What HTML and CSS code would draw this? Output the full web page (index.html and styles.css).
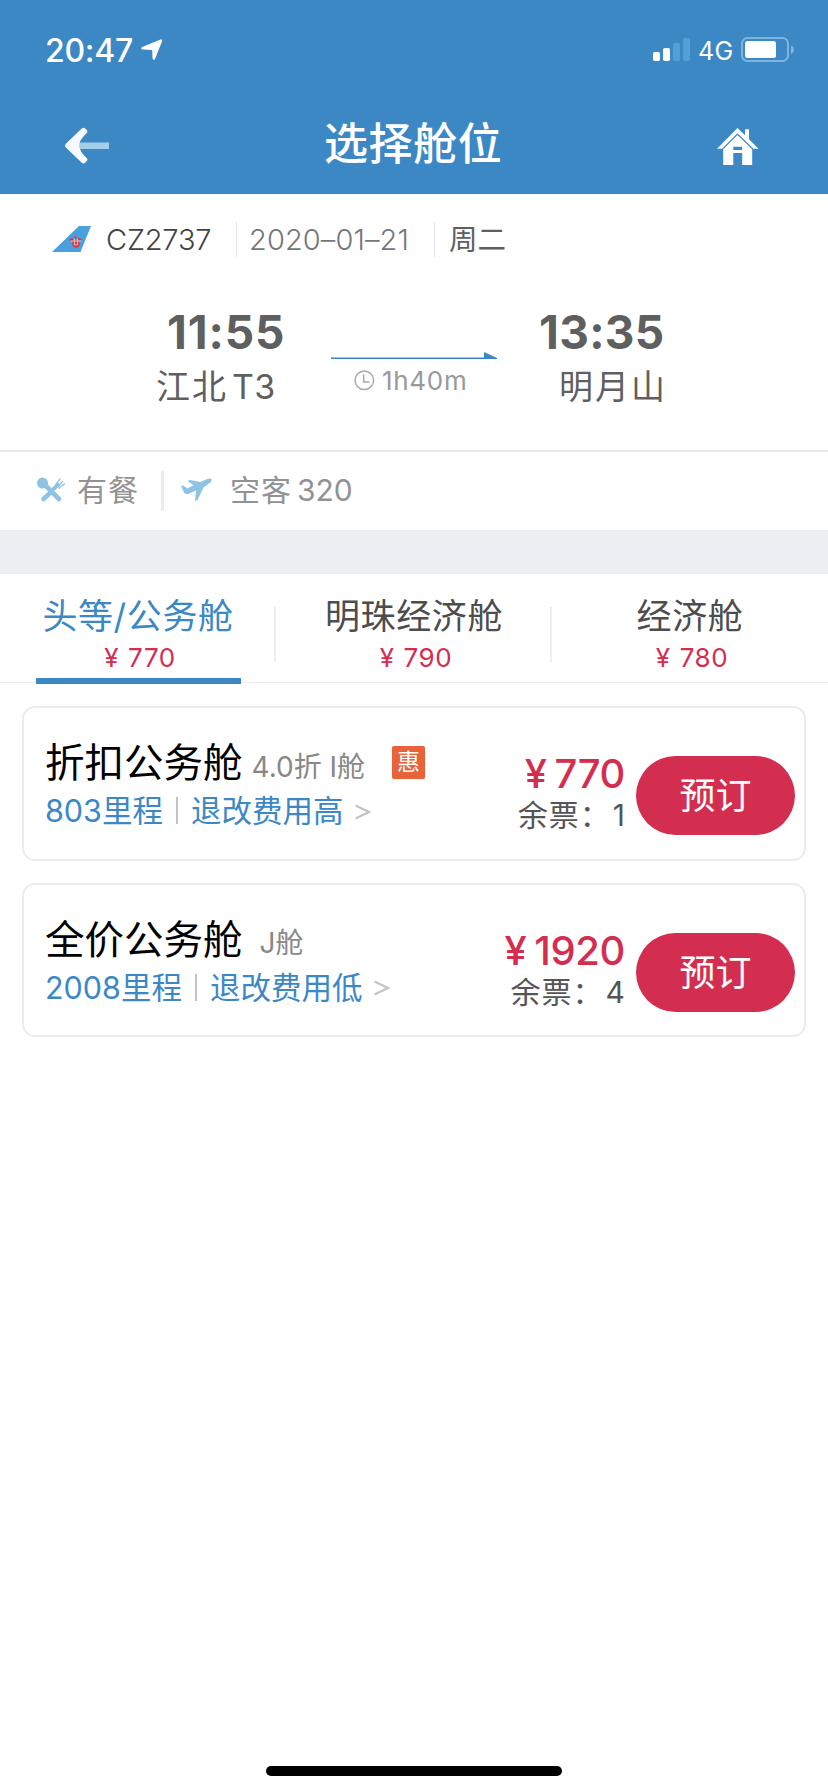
FILE: index.html
```html
<!DOCTYPE html>
<html lang="zh-CN">
<head>
<meta charset="utf-8">
<title>选择舱位</title>
<link rel="stylesheet" href="styles.css">
</head>
<body>
<div class="screen">
  <header class="header">
    <div class="status">
      <span class="status-time">20:47</span>
      <svg class="status-loc" width="22" height="22" viewBox="0 0 22 22"><path d="M19.500 .6 Q21.800 -.2 21.100 2.200 L14 20 Q12.600 21.800 11.600 19.800 L11.200 11 L1.600 10.600 Q-.8 9.600 1.200 8Z" fill="#fff"/></svg>
      <svg class="status-signal" width="38" height="24" viewBox="0 0 38 24"><g fill="#fff"><rect y="14" width="7" height="9" rx="1.8"/><rect x="10" y="10" width="7" height="13" rx="1.8"/></g><g fill="#549fd3"><rect x="20" y="5" width="7" height="18" rx="1.8"/><rect x="30" width="7" height="23" rx="1.8"/></g></svg>
      <span class="status-net">4G</span>
      <svg class="status-battery" width="54" height="26" viewBox="0 0 54 26"><rect x="1" y="1" width="46" height="23" rx="5.5" fill="none" stroke="#7db5de" stroke-width="2"/><rect x="4" y="4" width="31" height="17" rx="2.5" fill="#fff"/><path d="M50 8.5 Q53 9.5 53 12.5 Q53 15.500 50 17Z" fill="#7db5de"/></svg>
    </div>
    <nav class="nav">
      <svg class="nav-back" width="46" height="38" viewBox="0 0 46 38"><path d="M13 15.500H44V22H13Z" fill="#a4cde7"/><path d="M16.800 1.400 Q18.500 0 20.200 1.600 L22 3.300 Q23 4.800 21.600 6.200 Q14.500 12.500 14 18.600 Q14.500 24.500 21.600 31 Q23 32.400 22 33.800 L20.200 35.800 Q18.500 37.200 16.800 35.800 L.8 20.400 Q-.6 18.600 .8 16.800Z" fill="#f7faff"/></svg>
      <h1 class="nav-title">选择舱位</h1>
      <svg class="nav-home" width="42" height="38" viewBox="0 0 42 38"><path d="M20.500 0 L28 7.200 V1.200 H32 V11.200 L41.500 20.800 H36.500 L20.500 5.200 L5 20.800 H0Z" fill="#fff"/><path fill-rule="evenodd" d="M20.500 7 L35.200 21.200 V37 H25.200 V25 H16.300 V37 H6.200 V21.200Z M16.300 18.800 V22 H25.200 V18.800Z" fill="#fff"/></svg>
    </nav>
  </header>

  <section class="flight">
    <div class="flight-info">
      <svg class="tail" width="40" height="27" viewBox="0 0 40 27"><path d="M27 0H39L28.500 26H0Z" fill="#4a9fdf"/><path d="M17 14.500q1-3 4.500-2l-.5 2.500zM30 14q-1.500-2.500-4-2l.5 3zM22 10.500l1.500 3 1.500-3zM20.500 14h7v6q-3.500 3.500-7 0z" fill="#d9363f"/><path d="M22.500 12.500v6.500h3v-6.500M18.500 15h11" fill="none" stroke="#f3c4cd" stroke-width=".9"/></svg>
      <span class="flight-no">CZ2737</span>
      <span class="flight-date">2020–01–21</span>
      <span class="flight-day">周二</span>
    </div>
    <div class="route">
      <div class="stop stop-from"><div class="stop-time">11:55</div><div class="stop-city">江北<span class="terminal">T3</span></div></div>
      <div class="leg">
        <svg class="leg-line" width="167" height="8" viewBox="0 0 167 8"><path d="M0 5.500H153V0L166 6V7H0Z" fill="#3c88c5"/></svg>
        <div class="leg-time"><svg width="21" height="21" viewBox="0 0 21 21" fill="none" stroke="#aaa" stroke-width="1.500"><circle cx="10.300" cy="10.300" r="9.300"/><path d="M9.700 4.500V12H15.500"/></svg><span>1h40m</span></div>
      </div>
      <div class="stop stop-to"><div class="stop-time">13:35</div><div class="stop-city">明月山</div></div>
    </div>
    <div class="extras">
      <svg class="meal" width="29" height="26" viewBox="0 0 29 26"><g fill="none" stroke="#8fc3e3" stroke-linecap="round"><path d="M8 8L22 22" stroke-width="4.600"/><path d="M6.500 22L13 16" stroke-width="4.600"/><path d="M17 11.500L21 8" stroke-width="4"/><path d="M18.500 8L23 1.800M21 9.500L25.500 4.500M22 11.200L27.500 6.800" stroke-width="1.300"/></g><circle cx="5.500" cy="6" r="5.500" fill="#8fc3e3"/></svg>
      <span class="meal-text">有餐</span>
      <svg class="plane" width="32" height="24" viewBox="0 0 32 24"><path d="M30.500 1 Q31.500 3 28 5.500 L22.500 9.500 L16.500 22 L14 23 L15 12.500 L7 16 Q4 16.500 3 14.500 L0 8 L2 7.500 L6.500 10.500 L12.500 7.200 L6.500 3 L9 2 L19.500 4 L26 1 Q29.500 0 30.500 1Z" fill="#8fc3e3"/></svg>
      <span class="plane-text">空客<span class="model">320</span></span>
    </div>
  </section>

  <div class="band"></div>

  <div class="tabs">
    <div class="tab tab-active"><div class="tab-name">头等/公务舱</div><div class="tab-price"><span class="yen">¥</span>770</div></div>
    <div class="tab"><div class="tab-name">明珠经济舱</div><div class="tab-price"><span class="yen">¥</span>790</div></div>
    <div class="tab"><div class="tab-name">经济舱</div><div class="tab-price"><span class="yen">¥</span>780</div></div>
  </div>

  <main class="fares">
    <article class="fare">
      <div class="fare-main">
        <div class="fare-head"><span class="fare-name">折扣公务舱</span><span class="fare-class">4.0折 I舱</span><span class="fare-tag">惠</span></div>
        <div class="fare-rules"><span>803里程</span><i class="bar"></i><span>退改费用高</span><svg class="more" width="16" height="16" viewBox="0 0 16 16"><path d="M.5 1.500L14 8L.5 14.500" fill="none" stroke="#c0c3ca" stroke-width="2"/></svg></div>
      </div>
      <div class="fare-cost"><div class="fare-price"><span class="yen">¥</span>770</div><div class="fare-left">余票：<span class="count">1</span></div></div>
      <button class="book">预订</button>
    </article>
    <article class="fare">
      <div class="fare-main">
        <div class="fare-head"><span class="fare-name">全价公务舱</span><span class="fare-class fare-class-far">J舱</span></div>
        <div class="fare-rules"><span>2008里程</span><i class="bar"></i><span>退改费用低</span><svg class="more" width="16" height="16" viewBox="0 0 16 16"><path d="M.5 1.500L14 8L.5 14.500" fill="none" stroke="#c0c3ca" stroke-width="2"/></svg></div>
      </div>
      <div class="fare-cost"><div class="fare-price"><span class="yen">¥</span>1920</div><div class="fare-left">余票：<span class="count">4</span></div></div>
      <button class="book">预订</button>
    </article>
  </main>
  <div class="home-bar"></div>
</div>
</body>
</html>
```
FILE: styles.css
```css
* { box-sizing: border-box; margin: 0; padding: 0; }
body { background: #fff; font-family: Inter, "Noto Sans CJK SC", sans-serif; font-weight: 400; white-space: nowrap; }
svg { display: block; flex: none; }
.screen { width: 828px; height: 1792px; display: flex; flex-direction: column; overflow: hidden; }

.header { height: 194px; background: #3c88c5; color: #fff; }
.status { height: 100px; display: flex; align-items: center; padding-left: 45px; }
.status-time { width: 96px; font-size: 32px; font-weight: 500; letter-spacing: -.3px; }
.status-signal { margin-left: 490px; }
.status-net { width: 43px; margin-left: 7px; font-size: 25px; padding-top: 1px; letter-spacing: .4px; }
.nav { height: 92px; display: flex; align-items: center; padding-left: 65px; }
.nav-title { margin-left: 213px; width: 180px; font-size: 44px; line-height: 60px; font-weight: 500; letter-spacing: .6px; padding-bottom: 4px; }
.nav-home { margin-left: 213px; margin-top: 2px; }

.flight { height: 336px; color: #5f5f5f; }
.flight-info { height: 90px; display: flex; align-items: center; padding-left: 52px; }
.flight-no { width: 130px; margin-left: 14px; font-size: 29px; font-weight: 300; letter-spacing: -.2px; color: #444; }
.flight-date { width: 198px; height: 35px; line-height: 36px; padding-left: 12px; border-left: 1px solid #e2e4e8; font-size: 29px; font-weight: 300; letter-spacing: .1px; color: #777; }
.flight-day { height: 35px; line-height: 36px; padding-left: 14px; border-left: 1px solid #e0e5ec; font-size: 28.500px; }
.route { height: 166px; padding-top: 22px; display: flex; }
.stop-from { width: 175px; margin-left: 156px; }
.stop-time { font-size: 46px; line-height: 53px; height: 54px; font-weight: 700; }
.stop-from .stop-time { padding-left: 11px; letter-spacing: .9px; }
.stop-to .stop-time { letter-spacing: .3px; }
.stop-city { font-size: 34px; line-height: 53px; letter-spacing: 2px; }
.terminal { margin-left: 4px; letter-spacing: .4px; }
.leg { width: 208px; padding-top: 46px; }
.leg-time { display: flex; align-items: center; gap: 7px; height: 41px; padding-left: 23px; font-size: 26px; color: #999; letter-spacing: .7px; }
.stop-to .stop-city { padding-left: 20px; }
.extras { height: 80px; border-top: 2px solid #e6e9ed; display: flex; align-items: center; padding-left: 37px; font-size: 30px; color: #929292; }
.meal, .plane { margin-bottom: 2px; }
.meal-text { width: 87px; height: 40px; line-height: 38px; margin-left: 11px; border-right: 3px solid #ecedf2; letter-spacing: 1px; }
.plane { margin-left: 17px; }
.plane-text { margin-left: 17px; letter-spacing: 1px; line-height: 38px; padding-bottom: 3px; }
.model { margin-left: 5px; letter-spacing: 0; }
.band { height: 44px; background: #ebeff3; }

.tabs { height: 109px; display: flex; border-bottom: 1px solid #ececec; }
.tab { position: relative; width: 276px; padding-top: 16px; text-align: center; }
.tab:not(:last-child)::after { content: ""; position: absolute; right: 0; top: 33px; width: 2px; height: 55px; background: #ebeff4; }
.tab-name { height: 52px; line-height: 52px; font-size: 35px; letter-spacing: .6px; color: #4d4d4d; }
.tab-active .tab-name { color: #3c88c5; }
.tab-price { line-height: 31px; padding-left: 4px; font-size: 26px; letter-spacing: .6px; color: #d32e50; }
.tab-price .yen { margin-right: 9px; }
.tab-active::before { content: ""; position: absolute; left: 36px; top: 104px; width: 205px; height: 6px; background: #3c88c5; z-index: 1; }

.fares { padding: 23px 22px 0; display: grid; gap: 22px; }
.fare { height: 154.500px; border: 2px solid #e9ebef; border-radius: 13px; display: flex; }
.fare-main { width: 450px; padding: 31px 0 0 21px; }
.fare-head { height: 49px; display: flex; align-items: center; }
.fare-name { font-size: 39.500px; line-height: 49px; color: #000; }
.fare-class { margin-left: 9px; padding-top: 6px; font-size: 28px; line-height: 38px; color: #888; }
.fare-class-far { margin-left: 17px; }
.fare-tag { width: 33px; height: 33px; margin: -2px 0 0 27px; border-radius: 2px; background: #e8623a; color: #fff; font-size: 23px; line-height: 33px; text-align: center; }
.fare-rules { height: 42px; display: flex; align-items: center; font-size: 30.500px; color: #3c88c5; }
.bar { width: 2px; height: 27px; margin: 3px 13px 0; background: #c0c3ca; }
.more { margin: 5px 0 0 12px; }
.fare-cost { width: 151px; padding-top: 41px; text-align: right; }
.fare-price { height: 50px; line-height: 50px; font-size: 40px; font-weight: 500; color: #d32e50; letter-spacing: -.4px; }
.fare-price .yen { margin-right: 8px; }
.fare-left { height: 40px; line-height: 32px; font-size: 30px; color: #555; letter-spacing: 1px; }
.count { margin-left: 2px; letter-spacing: 0; }
.book { width: 159px; height: 79px; margin: 48px 0 0 11px; border: 0; border-radius: 40px; background: #d32e50; color: #fff; font: 400 36px/81px Inter, "Noto Sans CJK SC", sans-serif; }
.home-bar { width: 296px; height: 10px; margin: auto 266px 16px; border-radius: 5px; background: #000; flex: none; }
```
